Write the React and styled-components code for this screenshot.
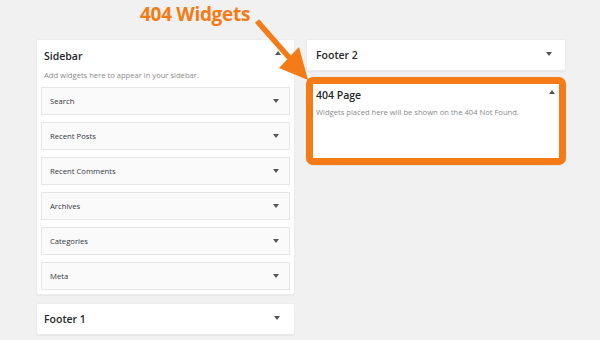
import React from "react";
import styled, { createGlobalStyle } from "styled-components";

const Global = createGlobalStyle`
  html, body { margin: 0; padding: 0; background: #f1f1f1; }
  * { box-sizing: border-box; }
`;

const ORANGE = "#f47b16";

const Page = styled.div`
  position: relative;
  width: 600px;
  height: 340px;
  overflow: hidden;
  background: #f1f1f1;
  font-family: "Open Sans", "Noto Sans", sans-serif;
  color: #23282d;
`;

const Heading = styled.h1`
  margin: 0;
  height: 39px;
  padding: 2px 0 0 140px;
  font-size: 19px;
  line-height: 24px;
  font-weight: 700;
  letter-spacing: -0.3px;
  color: ${ORANGE};
`;

const Columns = styled.div`
  display: grid;
  grid-template-columns: 259px 260px;
  column-gap: 11px;
  padding-left: 36px;
  align-items: start;
`;

const Column = styled.div`
  display: flex;
  flex-direction: column;
  gap: ${(p) => p.$gap}px;
`;

const Panel = styled.section`
  background: #fff;
  box-shadow: 0 1px 1px rgba(0, 0, 0, 0.04);
  border: ${(p) => (p.$highlight ? `7px solid ${ORANGE}` : "1px solid #ececec")};
  border-radius: ${(p) => (p.$highlight ? "7px" : "2px")};
  padding: ${(p) => p.$pad};
  min-height: ${(p) => p.$minH || 0}px;
`;

const PanelHead = styled.div`
  display: flex;
  align-items: ${(p) => (p.$top ? "flex-start" : "center")};
  justify-content: space-between;
  height: ${(p) => p.$h}px;
  padding: ${(p) => p.$pad};
`;

const PanelTitle = styled.h2`
  margin: 0;
  font-size: 10.5px;
  line-height: 14px;
  font-weight: 600;
  color: #23282d;
`;

const CaretBox = styled.span`
  display: flex;
  align-items: center;
  height: 14px;
  margin-top: ${(p) => p.$dy || 0}px;
`;

const Desc = styled.p`
  margin: ${(p) => p.$m};
  font-size: 7.6px;
  line-height: 12px;
  color: #8a8a8a;
`;

const WidgetList = styled.ul`
  list-style: none;
  margin: 6px 0 0;
  padding: 0;
  display: flex;
  flex-direction: column;
  gap: 7px;
`;

const WidgetRow = styled.li`
  display: flex;
  align-items: center;
  justify-content: space-between;
  height: 28px;
  padding: 0 10px 0 8px;
  background: #fafafa;
  border: 1px solid #e6e6e6;
  font-size: 7.7px;
  color: #32373c;
`;

const Caret = ({ up }) => (
  <svg width="6" height="4" viewBox="0 0 6 4" style={{ flex: "none", display: "block" }}>
    <path d={up ? "M0 4 L3 0 L6 4 Z" : "M0 0 L6 0 L3 4 Z"} fill="#555" />
  </svg>
);

const Overlay = styled.svg`
  position: absolute;
  left: 0;
  top: 0;
  pointer-events: none;
`;

const widgets = ["Search", "Recent Posts", "Recent Comments", "Archives", "Categories", "Meta"];

export default function App() {
  return (
    <Page>
      <Global />
      <Heading>404 Widgets</Heading>
      <Columns>
        <Column $gap={8}>
          <Panel $pad="0 4px 4px 4px">
            <PanelHead $top $h={32} $pad="9px 9px 0 3px">
              <PanelTitle>Sidebar</PanelTitle>
              <CaretBox $dy={-3}>
                <Caret up />
              </CaretBox>
            </PanelHead>
            <Desc $m="-3px 0 0 3px">Add widgets here to appear in your sidebar.</Desc>
            <WidgetList>
              {widgets.map((w) => (
                <WidgetRow key={w}>
                  <span>{w}</span>
                  <Caret />
                </WidgetRow>
              ))}
            </WidgetList>
          </Panel>
          <Panel $pad="0">
            <PanelHead $h={30} $pad="0 14px 0 7px">
              <PanelTitle>Footer 1</PanelTitle>
              <CaretBox $dy={-3}>
                <Caret />
              </CaretBox>
            </PanelHead>
          </Panel>
        </Column>
        <Column $gap={6}>
          <Panel $pad="0">
            <PanelHead $h={30} $pad="0 13px 0 9px">
              <PanelTitle>Footer 2</PanelTitle>
              <CaretBox $dy={-3}>
                <Caret />
              </CaretBox>
            </PanelHead>
          </Panel>
          <Panel $highlight $pad="0 4px 0 3px" $minH={88}>
            <PanelHead $top $h={18} $pad="4px 0 0 0">
              <PanelTitle>404 Page</PanelTitle>
              <CaretBox $dy={-3}>
                <Caret up />
              </CaretBox>
            </PanelHead>
            <Desc $m="4px 0 0 0">Widgets placed here will be shown on the 404 Not Found.</Desc>
          </Panel>
        </Column>
      </Columns>
      <Overlay width="600" height="340" viewBox="0 0 600 340">
        <line x1="257" y1="21" x2="294" y2="63" stroke={ORANGE} strokeWidth="5.5" strokeLinecap="butt" />
        <polygon points="279,68 299,47 308,80" fill={ORANGE} />
      </Overlay>
    </Page>
  );
}
